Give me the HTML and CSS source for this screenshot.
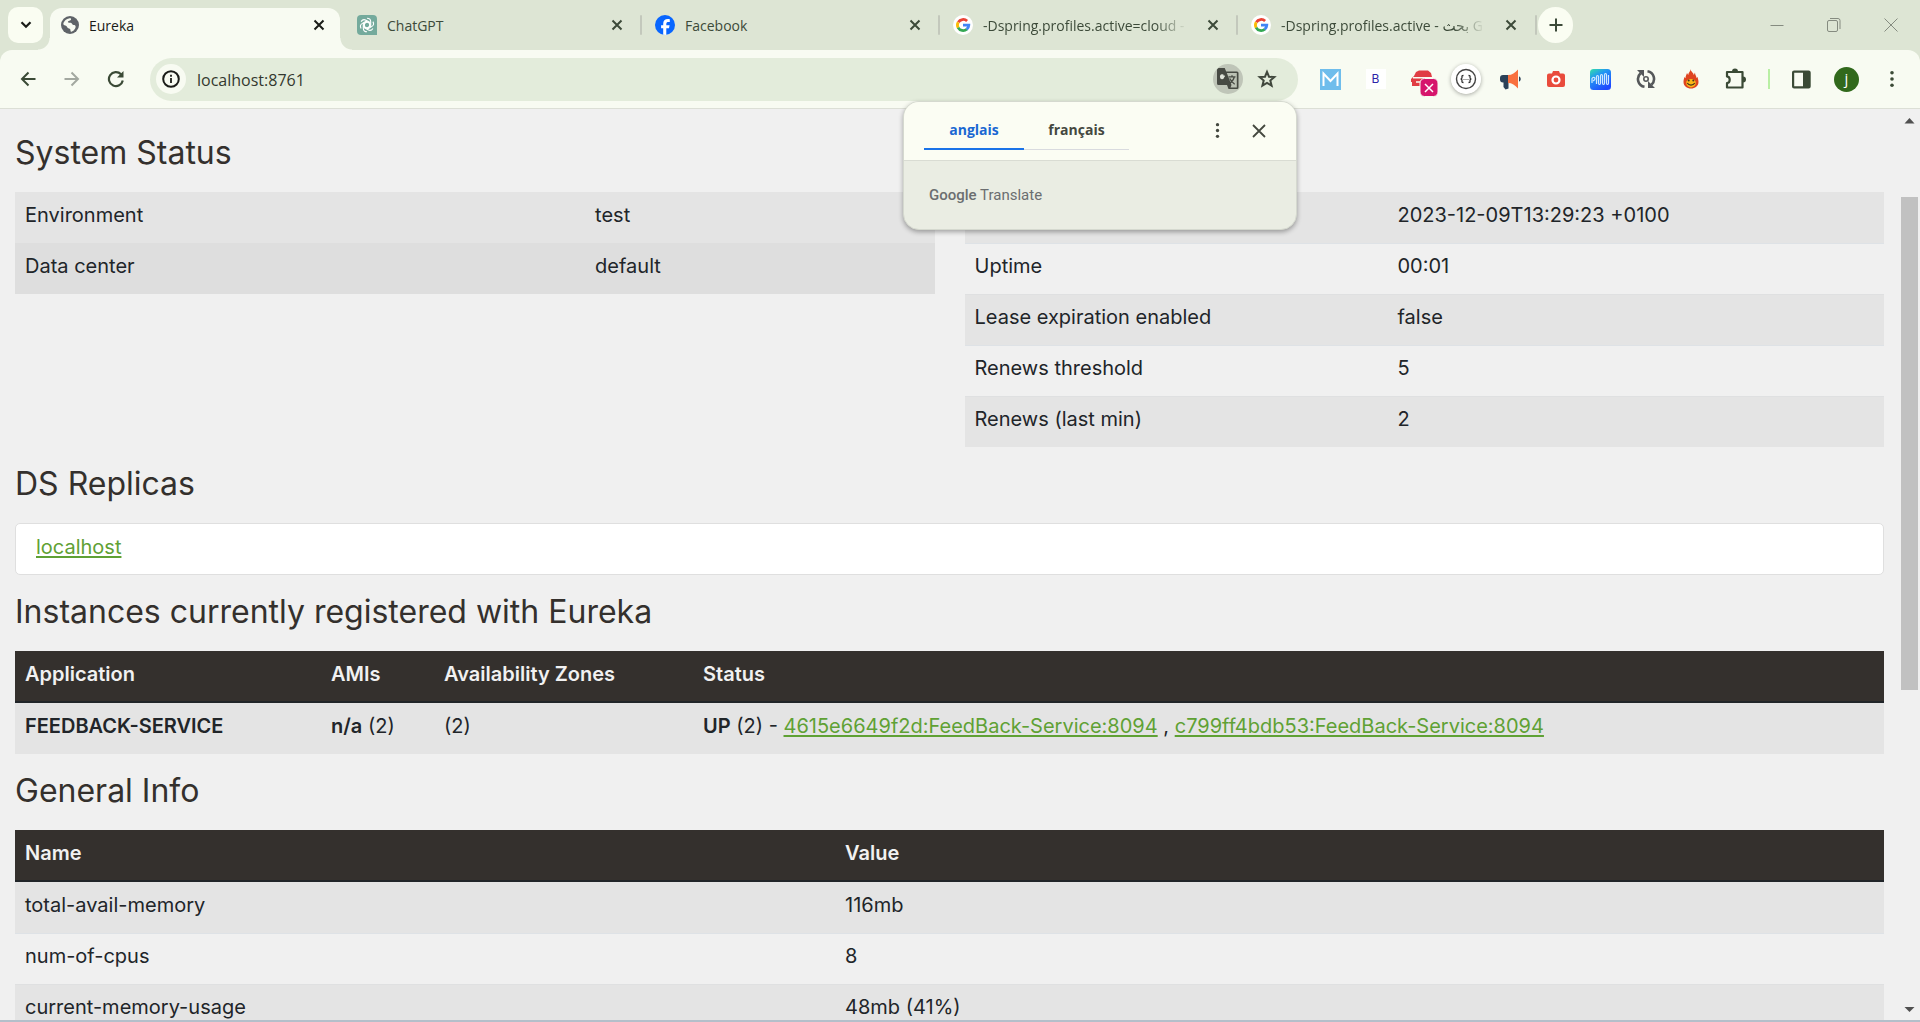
FILE: index.html
```html
<!DOCTYPE html>
<html lang="en">
<head>
<meta charset="utf-8">
<title>Eureka</title>
<link rel="stylesheet" href="styles.css">
</head>
<body>
<svg class="defs" aria-hidden="true">
  <symbol id="x" viewBox="0 0 12 12"><path d="M1.5 1.5l9 9M10.5 1.5l-9 9" stroke="currentColor" stroke-width="2" fill="none"/></symbol>
  <symbol id="x-thin" viewBox="0 0 14 14"><path d="M1 1l12 12M13 1L1 13" stroke="currentColor" stroke-width="1.800" fill="none"/></symbol>
  <symbol id="google" viewBox="0 0 20 20"><circle cx="10" cy="10" r="10" fill="#fff"/><g fill="none" stroke-width="2.8"><path d="M5.300 7.300A5.700 5.700 0 0 1 14.100 6" stroke="#ea4335"/><path d="M5.200 12.800A5.700 5.700 0 0 1 5.200 7.200" stroke="#fbbc05"/><path d="M13.800 14.200A5.700 5.700 0 0 1 5.100 12.600" stroke="#34a853"/><path d="M10 10.100h5.800a5.700 5.700 0 0 1-2.100 4.200" stroke="#4285f4"/></g></symbol>
  <symbol id="dots" viewBox="0 0 6 20"><g fill="currentColor"><circle cx="3" cy="3" r="2"/><circle cx="3" cy="10" r="2"/><circle cx="3" cy="17" r="2"/></g></symbol>
</svg>

<header class="tabstrip">
  <button class="tab-search" aria-label="Search tabs"><svg width="12" height="8" viewBox="0 0 12 8"><path d="M1.5 1.2L6 5.8l4.500-4.600" fill="none" stroke="#1a1c18" stroke-width="2.200"/></svg></button>
  <div class="tabs">
    <div class="tab active">
      <svg class="favicon small" viewBox="0 0 18 18"><circle cx="9" cy="9" r="9" fill="#5f6368"/><path d="M2.300 8.200C2.500 5.500 5 2.800 8 2.400c1.500-.2 2.500.2 2 1.300-.8 1.300-3 .8-3.200 2.300 0 1.200 3.900.2 4.400 1.900.4 1.300 2.200.6 3 1.500 1.400 1.700-.8 4.800-3.200 6.200-.9.4-1.500.1-1.500-.9 0-1.300-.3-2-1.600-2.200-1.600-.3-1.500-1.600-2.900-2.700C4 9 2.800 9.300 2.300 8.200z" fill="#f8fbf2"/><path d="M10.500 3c1.200-.5 4.500 1.300 5.200 4-.8 1-2.200.8-3-.2-.6-.7-2.400-.3-2.900-1.200-.4-.9.600-1.100.7-2.600z" fill="#5f6368"/></svg>
      <span class="tab-title">Eureka</span>
      <button class="tab-close" aria-label="Close"><svg width="12" height="12"><use href="#x"/></svg></button>
    </div>
    <div class="tab">
      <svg class="favicon" viewBox="0 0 20 20"><path d="M4 0h12a4 4 0 0 1 4 4v16H4a4 4 0 0 1-4-4V4a4 4 0 0 1 4-4z" fill="#74aa9c"/><g fill="none" stroke="#fff" stroke-width="1.100"><path id="petal" d="M10 3.200c2 0 3.700 1.500 3.700 3.600v4.300L10 13.200 7.300 11.600"/><use href="#petal" transform="rotate(60 10 10)"/><use href="#petal" transform="rotate(120 10 10)"/><use href="#petal" transform="rotate(180 10 10)"/><use href="#petal" transform="rotate(240 10 10)"/><use href="#petal" transform="rotate(300 10 10)"/></g></svg>
      <span class="tab-title">ChatGPT</span>
      <button class="tab-close" aria-label="Close"><svg width="12" height="12"><use href="#x"/></svg></button>
    </div>
    <div class="tab split">
      <svg class="favicon" viewBox="0 0 20 20"><circle cx="10" cy="10" r="10" fill="#0866ff"/><path d="M8.200 19.800v-6.500H6.100v-3h2.100V9c0-3.400 1.500-5 4.800-5 .6 0 1.300.1 1.800.2V7c-.3 0-.8-.1-1.300-.1-1.600 0-2.200.6-2.200 2.200v1.200h3.300l-.6 3h-2.700v6.600z" fill="#fff"/></svg>
      <span class="tab-title">Facebook</span>
      <button class="tab-close" aria-label="Close"><svg width="12" height="12"><use href="#x"/></svg></button>
    </div>
    <div class="tab split">
      <svg class="favicon"><use href="#google"/></svg>
      <span class="tab-title fade">-Dspring.profiles.active=cloud -</span>
      <button class="tab-close" aria-label="Close"><svg width="12" height="12"><use href="#x"/></svg></button>
    </div>
    <div class="tab split">
      <svg class="favicon"><use href="#google"/></svg>
      <span class="tab-title fade">-Dspring.profiles.active - بحث G</span>
      <button class="tab-close" aria-label="Close"><svg width="12" height="12"><use href="#x"/></svg></button>
    </div>
    <span class="tab-end"></span>
  </div>
  <button class="new-tab" aria-label="New tab"><svg width="14" height="14" viewBox="0 0 14 14"><path d="M7 .5v13M.5 7h13" stroke="#3c4a39" stroke-width="2"/></svg></button>
  <div class="window-controls">
    <button aria-label="Minimize"><svg width="14" height="14" viewBox="0 0 14 14"><path d="M.5 7.500h13" stroke="currentColor"/></svg></button>
    <button aria-label="Restore"><svg width="14" height="14" viewBox="0 0 14 14" fill="none" stroke="currentColor"><rect x=".5" y="2.500" width="10" height="11" rx="1.500"/><path d="M3 .5h8a2 2 0 0 1 2 2V11"/></svg></button>
    <button aria-label="Close window"><svg width="14" height="14" viewBox="0 0 14 14"><path d="M.5.5l13 13M13.500.5l-13 13" stroke="currentColor"/></svg></button>
  </div>
</header>

<div class="toolbar-wrap">
<nav class="toolbar">
  <button class="nav-btn" aria-label="Back"><svg width="16" height="16" viewBox="0 0 16 16"><path d="M15.500 8H2M8.500 1.500L2 8l6.500 6.500" fill="none" stroke="#3b4a36" stroke-width="2"/></svg></button>
  <button class="nav-btn" aria-label="Forward"><svg width="16" height="16" viewBox="0 0 16 16"><path d="M.5 8H14M7.500 1.500L14 8l-6.500 6.500" fill="none" stroke="#a3a8a0" stroke-width="2"/></svg></button>
  <button class="nav-btn" aria-label="Reload"><svg width="18" height="18" viewBox="0 0 18 18"><path d="M15.800 10.500A7 7 0 1 1 14 4.200" fill="none" stroke="#3b4a36" stroke-width="2.200"/><path d="M16.500 1v6.500H10z" fill="#3b4a36"/></svg></button>
  <div class="omnibox">
    <button class="site-info" aria-label="Site information"><svg width="18" height="18" viewBox="0 0 18 18"><circle cx="9" cy="9" r="7.800" fill="none" stroke="#1a1c18" stroke-width="2"/><path d="M9 8v5M9 4.800v2" stroke="#1a1c18" stroke-width="1.800"/></svg></button>
    <input class="url" type="text" value="localhost:8761" aria-label="Address">
    <button class="translate-btn" aria-label="Translate"><svg width="22" height="22" viewBox="0 0 22 22"><path d="M1.500 0h6.200l1.500 3.500H20A1.500 1.500 0 0 1 21.500 5v14.500A1.500 1.500 0 0 1 20 21h-8.500L10 17H1.500A1.500 1.500 0 0 1 0 15.500v-14z" fill="#474a43"/><path d="M9.800 5h10v14.500h-6.300l1-2.500z" fill="#bcc2b5"/><path d="M8.300 7H5.500v1.500h1.400c-.3 1.200-2.800 1.400-2.800-.9 0-2.200 2.200-2 2.700-1.400" transform="translate(-.5 1.200)" stroke="#dfe3d9" fill="none" stroke-width="1.400"/><path d="M11.500 8.800h7M15 7.300v1.500M17.200 9c-.5 2.500-2.500 5-4.700 6.200M12.700 10.500c1.300 2.500 3 4.500 5 5.700" stroke="#474a43" stroke-width="1.300" fill="none"/></svg></button>
    <button class="star-btn" aria-label="Bookmark"><svg width="20" height="20" viewBox="0 0 20 20"><path d="M10 2.800l2 4.900 5.300.4-4 3.400 1.300 5.200L10 13.900l-4.600 2.800 1.300-5.200-4-3.400L8 7.700z" fill="none" stroke="#41483d" stroke-width="2"/></svg></button>
    <section class="translate-popup" aria-label="Translate">
      <div class="popup-head">
        <div class="langs"><button class="lang selected">anglais</button><button class="lang">français</button></div>
        <button class="popup-icon" aria-label="Options"><svg width="5" height="17" viewBox="0 0 6 20"><use href="#dots"/></svg></button>
        <button class="popup-icon" aria-label="Close"><svg width="14" height="14"><use href="#x-thin"/></svg></button>
      </div>
      <div class="popup-body"><b>Google</b> Translate</div>
    </section>
  </div>
  <div class="extensions">
    <button aria-label="M"><svg width="21" height="21" viewBox="0 0 21 21"><path d="M0 0h21v21H0z" fill="#6fbdec"/><path d="M3.500 17V4.500l7 7.500 7-7.500V17" fill="none" stroke="#fff" stroke-width="2"/></svg></button>
    <button class="ext-b"><span>B</span></button>
    <button class="ext-car" aria-label="Car"><svg width="28" height="28" viewBox="0 0 28 28"><path d="M6 3l3-1.500h9L21 4l1 4H3.500zM1 10l3-3h16v3l-3 2v5H2v-4H1z" fill="#e03d44"/><path d="M3 8.800h18M6 13h8" stroke="#f8fbf2" stroke-width="1.400"/><rect x="10" y="9.500" width="18" height="18" rx="4.500" fill="#d6156c" stroke="#f8fbf2"/><path d="M15 15l8 8M23 15l-8 8" stroke="#fff" stroke-width="1.500"/></svg></button>
    <button aria-label="JSON"><svg class="round-ext" width="30" height="30" viewBox="0 0 30 30"><circle cx="15" cy="15" r="15" fill="#fff"/><circle cx="15" cy="15" r="9.500" fill="none" stroke="#444" stroke-width="1.400"/><path d="M12.500 11.500c-2 0-1.500 1-1.500 2s-.5 1.500-1.400 1.500c.9 0 1.400.5 1.400 1.500s-.5 2 1.500 2M17.500 11.500c2 0 1.500 1 1.500 2s.5 1.500 1.400 1.500c-.9 0-1.400.5-1.400 1.500s.5 2-1.500 2" fill="none" stroke="#333" stroke-width="1.300"/><path d="M12.500 15.500h5" stroke="#555" stroke-dasharray="1 1"/></svg></button>
    <button aria-label="Megaphone"><svg width="21" height="21" viewBox="0 0 21 21"><path d="M8 6H3a3 3 0 0 0-3 3v1.500a3 3 0 0 0 3 3h.5V18l2 2.500 3-1V14z" fill="#2b4158"/><path d="M8 6c4 0 7-2 10-5.500v19C15 16 12 14 8 14z" fill="#f9703e"/><path d="M19 7.500c2.300.5 2.300 4.500 0 5z" fill="#2b4158"/></svg></button>
    <button aria-label="Screenshot"><svg width="18" height="17" viewBox="0 0 18 17"><path d="M2 2.500h3L6 0h6l1 2.500h3a2 2 0 0 1 2 2V14a2 2 0 0 1-2 2H2a2 2 0 0 1-2-2V4.500a2 2 0 0 1 2-2z" fill="#e94b3c"/><circle cx="9" cy="9" r="3.500" fill="none" stroke="#fff" stroke-width="2.200"/></svg></button>
    <button aria-label="Sound wave"><svg width="21" height="21" viewBox="0 0 21 21"><defs><linearGradient id="wave" x1="0" y1="0" x2=".6" y2="1"><stop offset="0" stop-color="#35e0a8"/><stop offset=".4" stop-color="#2196f3"/><stop offset="1" stop-color="#1f4bff"/></linearGradient></defs><rect width="21" height="21" rx="3.500" fill="url(#wave)"/><path d="M2 14V9.500c.5-1.500 3-1.500 3 0 0 1-1 2-2 2.500M6.500 15V8c0-2 2-2 2 0v6c0 2 2 2 2 0V7c0-2 2-2 2 0v7c0 2 2 2 2 0V6c0-2 2-2 2 0v8c0 2 2 2 2 0V6" fill="none" stroke="#cfe9ff" stroke-width="1.200"/></svg></button>
    <button aria-label="Sync"><svg width="20" height="20" viewBox="0 0 20 20"><g fill="none" stroke="#55585a" stroke-width="2.600"><path d="M8.500 17.800A7.800 7.800 0 0 1 4.600 4.300M11.500 2.200A7.800 7.800 0 0 1 15.400 15.700"/></g><path d="M1 1h7v7zM19 19h-7v-7z" fill="#55585a"/><circle cx="10" cy="10" r="2.200" fill="none" stroke="#55585a" stroke-width="1.600"/></svg></button>
    <button aria-label="Flame"><svg width="16" height="20" viewBox="0 0 16 20"><path d="M7.500 0c0 2.500 3 3.500 3.300 6L12 3.500c0 2.500 1.500 3.500 1.500 5.500l1.200-1c0 1.500.8 3 .8 5 0 4-3.500 6.500-7.500 6.500S.5 17 .5 13c0-2 .6-3.500.8-5l1.200 1.200C2.500 7 3.500 6 4 4l1.200 2C5.500 3.500 7.500 2.500 7.500 0z" fill="#df4420"/><path d="M8 10c3 0 4.800 1.500 4.800 3.900a4.800 4.500 0 0 1-9.600 0C3.200 11.500 5 10 8 10z" fill="#fbb616"/><circle cx="5.700" cy="11.500" r="1" fill="#432"/><circle cx="10.300" cy="11.500" r="1" fill="#432"/><path d="M4.200 14c1.800 2.800 5.800 2.800 7.600 0" fill="none" stroke="#432" stroke-width="1.200"/></svg></button>
    <button aria-label="Extensions"><svg width="22" height="22" viewBox="0 0 22 22"><path d="M2 4h15.500v15.500H2v-4.300c3.600-.4 3.600-6.400 0-6.800z" fill="none" stroke="#3b4a36" stroke-width="2.200" stroke-linejoin="round"/><path d="M7 3.500a3 3 0 0 1 6 0zM18 8.500a3 3 0 0 1 0 6z" fill="#3b4a36"/></svg></button>
  </div>
  <div class="toolbar-end">
    <button aria-label="Side panel"><svg width="19" height="19" viewBox="0 0 19 19"><rect x="1.100" y="1.600" width="16.500" height="15.800" rx="1" fill="none" stroke="#3b4a36" stroke-width="2.200"/><path d="M11 2h6.500v15H11z" fill="#3b4a36"/></svg></button>
    <button class="profile"><span>j</span></button>
    <button class="menu" aria-label="Menu"><svg width="6" height="18" viewBox="0 0 6 20"><use href="#dots"/></svg></button>
  </div>
</nav>
</div>

<div class="viewport">
  <main class="page">
    <h1>System Status</h1>
    <div class="columns">
      <table class="data">
        <colgroup><col class="w-env"><col></colgroup>
        <tbody>
          <tr><td>Environment</td><td>test</td></tr>
          <tr class="hover"><td>Data center</td><td>default</td></tr>
        </tbody>
      </table>
      <table class="data">
        <colgroup><col class="w-stat"><col></colgroup>
        <tbody>
          <tr><td>Current time</td><td>2023-12-09T13:29:23 +0100</td></tr>
          <tr><td>Uptime</td><td>00:01</td></tr>
          <tr><td>Lease expiration enabled</td><td>false</td></tr>
          <tr><td>Renews threshold</td><td>5</td></tr>
          <tr><td>Renews (last min)</td><td>2</td></tr>
        </tbody>
      </table>
    </div>

    <h1>DS Replicas</h1>
    <ul class="replicas"><li><a href="#localhost">localhost</a></li></ul>

    <h1>Instances currently registered with Eureka</h1>
    <table class="data">
      <colgroup><col class="w-app"><col class="w-ami"><col class="w-zone"><col></colgroup>
      <thead><tr><th>Application</th><th>AMIs</th><th>Availability Zones</th><th>Status</th></tr></thead>
      <tbody><tr><td><b>FEEDBACK-SERVICE</b></td><td><b>n/a</b> (2)</td><td>(2)</td><td><b>UP</b> (2) - <a href="#instance-1">4615e6649f2d:FeedBack-Service:8094</a> , <a href="#instance-2">c799ff4bdb53:FeedBack-Service:8094</a></td></tr></tbody>
    </table>

    <h1>General Info</h1>
    <table class="data">
      <colgroup><col class="w-name"><col></colgroup>
      <thead><tr><th>Name</th><th>Value</th></tr></thead>
      <tbody>
        <tr><td>total-avail-memory</td><td>116mb</td></tr>
        <tr><td>num-of-cpus</td><td>8</td></tr>
        <tr><td>current-memory-usage</td><td>48mb (41%)</td></tr>
      </tbody>
    </table>
  </main>
  <div class="scrollbar" aria-hidden="true">
    <svg width="21" height="21" viewBox="0 0 21 21"><path d="M5.500 14.500h10l-5-5.500z" fill="#505050"/></svg>
    <div class="track"><div class="thumb"></div></div>
    <svg width="21" height="21" viewBox="0 0 21 21"><path d="M5.500 8h10l-5 5z" fill="#505050"/></svg>
  </div>
</div>
</body>
</html>
```
FILE: styles.css
```css
* { box-sizing: border-box; }

body {
  margin: 0;
  height: 100vh;
  display: flex;
  flex-direction: column;
  overflow: hidden;
  background: #f0f0f0;
  color: #212529;
  font: 20px/30px Inter, sans-serif;
  border-bottom: 2px solid #b4bfca;
}

button {
  display: flex;
  align-items: center;
  justify-content: center;
  flex: none;
  margin: 0;
  padding: 0;
  border: 0;
  background: none;
  color: inherit;
  font: inherit;
}

svg { display: block; flex: none; }
.defs { position: absolute; width: 0; height: 0; }

/* Tab strip */
.tabstrip {
  display: flex;
  flex: none;
  align-items: center;
  height: 50px;
  background: #dde5d4;
  color: #3c4a39;
  font: 14px/20px "Open Sans", "DejaVu Sans", sans-serif;
}

.tab-search {
  width: 35px;
  height: 36px;
  margin: 0 2px 0 8px;
  border-radius: 10px;
  background: #fafdf2;
}

.tabs { display: flex; height: 50px; }

.tab {
  position: relative;
  display: flex;
  align-items: center;
  width: 298px;
  padding: 0 12px 0 14px;
}

.tab.active::before {
  content: "";
  position: absolute;
  inset: 8px 3px 0 5px;
  border-radius: 12px 12px 0 0;
  background: #f8fbf2;
}

.tab.active::after {
  content: "";
  position: absolute;
  inset: auto -9px 0 -7px;
  height: 12px;
  background:
    radial-gradient(circle at 0 0, transparent 11px, #f8fbf2 12px) left / 12px 12px no-repeat,
    radial-gradient(circle at 100% 0, transparent 11px, #f8fbf2 12px) right / 12px 12px no-repeat;
}

.tab.active { color: #1a1c18; z-index: 1; }
.tab.active > * { position: relative; z-index: 1; }

.split::before,
.tab-end {
  content: "";
  align-self: center;
  width: 2px;
  height: 20px;
  border-radius: 1px;
  background: #c3c8bc;
}

.split::before { margin: 0 13px 0 -15px; }

.favicon { width: 20px; height: 20px; margin-right: 10px; }
.favicon.small { width: 18px; height: 18px; margin: 0 10px 0 2px; }

.tab-title {
  flex: 1;
  padding-top: 2px;
  white-space: nowrap;
}

.fade {
  margin-right: 14px;
  -webkit-mask-image: linear-gradient(to right, #000 calc(100% - 32px), transparent);
  mask-image: linear-gradient(to right, #000 calc(100% - 32px), transparent);
}

.tab-close { width: 24px; height: 24px; }

.new-tab {
  width: 35px;
  height: 36px;
  margin-left: 1px;
  border-radius: 18px;
  background: #fafdf2;
}

.window-controls {
  display: flex;
  margin-left: auto;
  padding-right: 1px;
  color: #858b80;
}

.window-controls button { width: 57px; height: 48px; }

/* Toolbar */
.toolbar-wrap { flex: none; background: #dde5d4; }

.toolbar {
  display: flex;
  align-items: center;
  height: 59px;
  padding: 0 6px;
  border-bottom: 1px solid #dcdfd6;
  border-radius: 12px 12px 0 0;
  background: #f8fbf2;
}

.nav-btn { width: 44px; height: 44px; }

.omnibox {
  position: relative;
  display: flex;
  flex: 1;
  align-items: center;
  height: 43px;
  margin: 0 10px 0 12px;
  padding: 0 16px 0 6px;
  border-radius: 22px;
  background: #e3ecdb;
}

.site-info,
.translate-btn {
  width: 30px;
  height: 30px;
  border-radius: 15px;
  background: #f8fbf2;
}

.translate-btn { background: #bfc5b8; }
.star-btn { width: 30px; height: 30px; margin-left: 9px; }

.url {
  flex: 1;
  min-width: 0;
  margin: 0 11px;
  padding: 2px 0 0;
  border: 0;
  outline: 0;
  background: none;
  color: #33382f;
  font: 16px/24px "Open Sans", sans-serif;
}

.extensions,
.toolbar-end { display: flex; align-items: center; }

.extensions button,
.toolbar-end button { width: 45px; height: 45px; }

.extensions .ext-car { padding: 8px 0 0 6px; }

.ext-b span {
  width: 20px;
  height: 20px;
  background: #fff;
  color: #2d23a8;
  font: 12px/20px Inter, sans-serif;
}

.round-ext { border-radius: 15px; box-shadow: 0 1px 4px #0005; }

.toolbar-end { color: #3b4a36; }

.toolbar-end::before {
  content: "";
  width: 2px;
  height: 20px;
  margin: 0 9px 0 10px;
  background: #b9efa4;
}

.profile span {
  width: 25px;
  height: 25px;
  border-radius: 13px;
  background: #31691c;
  color: #fff;
  font: 15px/23px "Open Sans", sans-serif;
}

/* Translate popup */
.translate-popup {
  position: absolute;
  z-index: 2;
  top: 43px;
  right: 1px;
  width: 394px;
  border: 1px solid #d5d9cf;
  border-radius: 16px;
  overflow: hidden;
  background: #eaede3;
  box-shadow: 0 2px 5px #0005;
}

.popup-head {
  display: flex;
  align-items: center;
  height: 59px;
  padding: 0 16px 0 20px;
  border-bottom: 1px solid #d9dcd3;
  background: #fbfdf3;
  color: #44483f;
}

.langs {
  display: flex;
  align-self: flex-start;
  margin: 8px auto 0 0;
  font: bold 14px/20px "Open Sans", sans-serif;
}

.lang {
  width: 105px;
  height: 40px;
  padding-top: 2px;
  border-bottom: 1px solid #d9dbdf;
}

.lang.selected { width: 100px; border-bottom: 2px solid #1a73e8; color: #1967d2; }
.popup-icon { width: 42px; height: 42px; }

.popup-body {
  padding: 24px 25px;
  color: #6b6e70;
  font: 15px/20px Roboto, sans-serif;
}

.popup-body b { font-weight: 500; }

/* Page */
.viewport { display: flex; flex: 1; min-height: 0; }

.page {
  flex: 1;
  min-width: 0;
  overflow: hidden;
  padding: 7px 15px 0;
}

h1 {
  margin: 0;
  padding: 19px 0 21px;
  color: #34302d;
  font: 400 32px/36px Inter, sans-serif;
}

.columns {
  display: grid;
  grid-template-columns: 1fr 1fr;
  align-items: start;
  gap: 30px;
}

.data {
  width: 100%;
  table-layout: fixed;
  border-spacing: 0;
}

.data td,
.data th {
  padding: 7px 10px 13px;
  text-align: left;
}

.data td { border-top: 1px solid #dee2e6; }

.data th {
  padding: 8px 10px 12px;
  border-bottom: 2px solid #212529;
  background: #34302d;
  color: #f1f1f1;
}

.data tr:nth-child(odd) td { background: #e4e4e4; border-color: #dfe0e1; }
.data tbody tr:first-child td { border-color: #e4e4e4; }
.data .hover td { background: #dedede; border-color: #dedede; }

.w-env { width: 62%; }
.w-stat { width: 46%; }
.w-app { width: 306px; }
.w-ami { width: 113px; }
.w-zone { width: 259px; }
.w-name { width: 820px; }

a { color: #5fa134; text-underline-offset: 2px; }
b, th { font-weight: 600; }

.replicas {
  margin: 0;
  padding: 8px 20px 12px;
  border: 1px solid #dfdfdf;
  border-radius: 5px;
  background: #fff;
  list-style: none;
}

/* Scrollbar */
.scrollbar { display: flex; flex: none; flex-direction: column; width: 21px; }

.track {
  display: grid;
  flex: 1;
  grid-template-rows: 67fr 493fr 309fr;
  padding: 0 2px;
}

.thumb { grid-row: 2; background: #c1c1c1; }
```
